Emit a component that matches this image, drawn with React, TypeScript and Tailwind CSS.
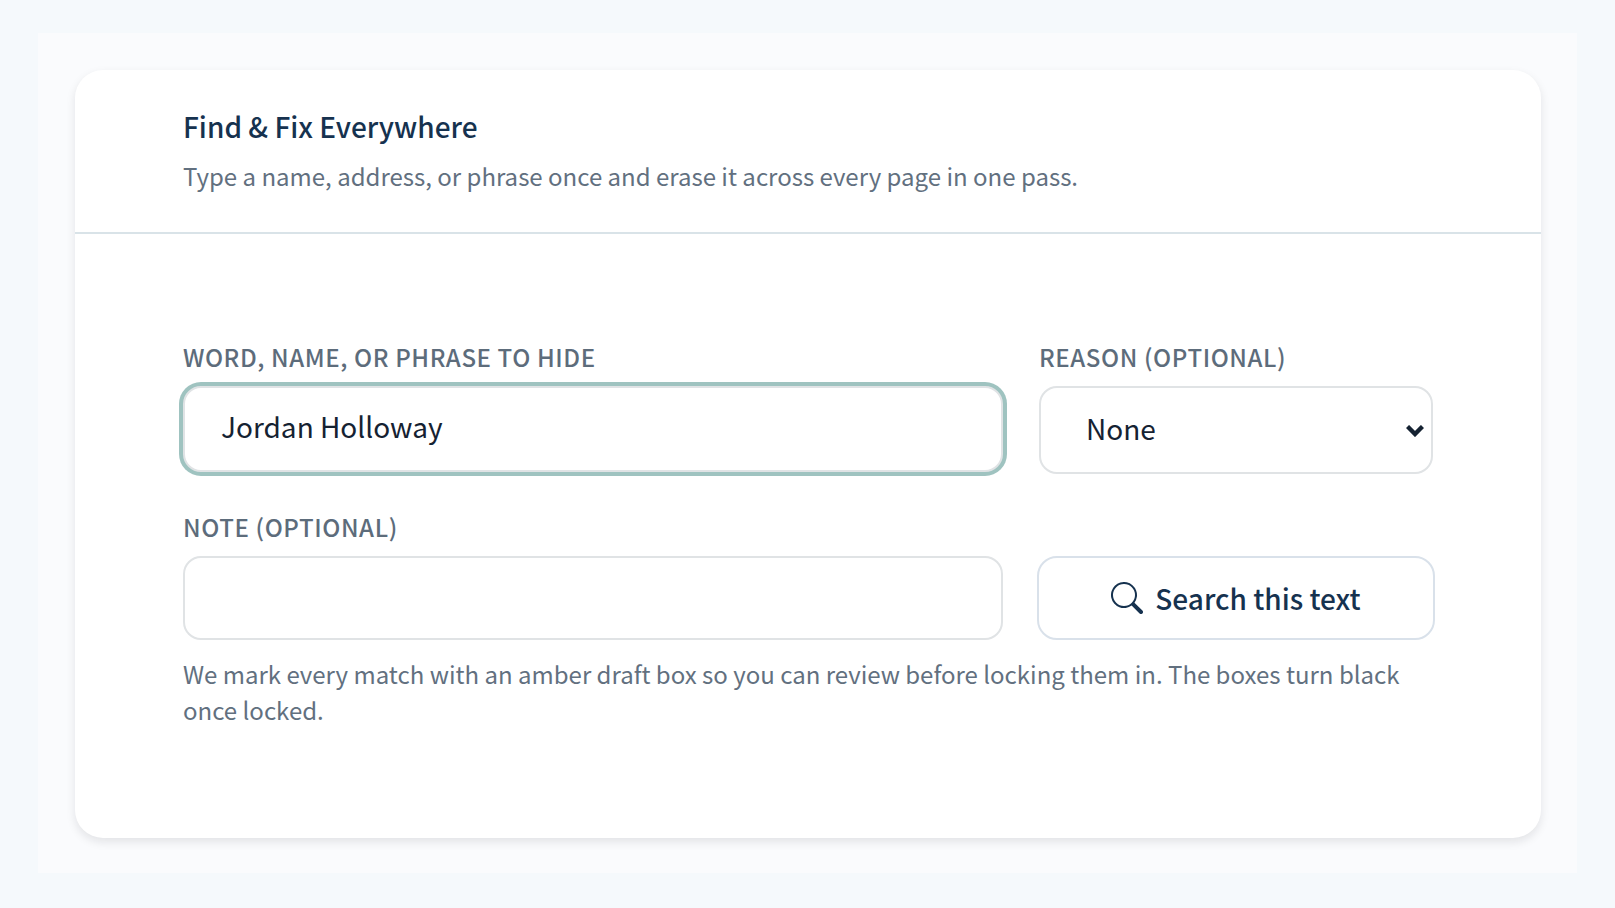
import { useState } from 'react';
import type { ReactNode } from 'react';
import { BsSearch } from 'react-icons/bs';
import { cx } from 'class-variance-authority';

const fieldClass =
  'w-full rounded-[18px] border-2 border-[#e0e3e5] bg-white text-[28px] text-[#152232] outline-none';

const reasons = ['None', 'Personal data', 'Confidential', 'Legal privilege'];

const Field = ({ id, label, children }: { id: string; label: string; children: ReactNode }) => (
  <div className="flex flex-col">
    <label
      htmlFor={id}
      className="mb-[11px] text-[24px] leading-9 font-medium tracking-wide uppercase text-[#5d6c7b]"
    >
      {label}
    </label>
    {children}
  </div>
);

export default function App() {
  const [phrase, setPhrase] = useState('Jordan Holloway');
  const [reason, setReason] = useState('None');
  const [note, setNote] = useState('');

  return (
    <main className="flex min-h-screen flex-col bg-[#f5f9fc] px-[38px] pt-[33px] pb-[35px] font-['Noto_Sans_CJK_SC',sans-serif]">
      <div className="flex flex-1 flex-col bg-[#fafbfd] pt-[37px] pr-9 pb-[35px] pl-[37px]">
        <section className="flex-1 rounded-[28px] bg-white shadow-[0_4px_10px_rgba(15,23,32,0.1)]">
          <header className="border-b-2 border-[#d9e3e8] px-[108px] pt-[34px] pb-[38px]">
            <h1 className="text-[28px] leading-[44px] font-medium text-[#16324f]">
              Find &amp; Fix Everywhere
            </h1>
            <p className="mt-2.5 text-[24px] leading-9 text-[#62707f]">
              Type a name, address, or phrase once and erase it across every page in one pass.
            </p>
          </header>

          <form className="px-[108px] pt-[105px] pb-24" onSubmit={(e) => e.preventDefault()}>
            <div className="grid grid-cols-[820fr_394fr] gap-x-9 gap-y-[35px]">
              <Field id="phrase" label="Word, name, or phrase to hide">
                <input
                  id="phrase"
                  type="text"
                  value={phrase}
                  onChange={(e) => setPhrase(e.target.value)}
                  className={cx(fieldClass, 'h-[86px] px-9 pb-1.5 ring-4 ring-[#9fc3c0]')}
                />
              </Field>

              <Field id="reason" label="Reason (optional)">
                <div className="relative">
                  <select
                    id="reason"
                    value={reason}
                    onChange={(e) => setReason(e.target.value)}
                    className={cx(fieldClass, 'h-[88px] appearance-none pr-12 pb-1 pl-[45px]')}
                  >
                    {reasons.map((r) => (
                      <option key={r}>{r}</option>
                    ))}
                  </select>
                  <svg
                    viewBox="0 0 18 12"
                    className="pointer-events-none absolute top-[39px] right-[9px] h-3 w-[18px]"
                    fill="none"
                    stroke="#152232"
                    strokeWidth="4.4"
                    aria-hidden="true"
                  >
                    <path d="M1.5 1.5 9 9l7.5-7.5" />
                  </svg>
                </div>
              </Field>

              <Field id="note" label="Note (optional)">
                <input
                  id="note"
                  type="text"
                  value={note}
                  onChange={(e) => setNote(e.target.value)}
                  className={cx(fieldClass, 'h-[84px] px-9 pb-1.5')}
                />
              </Field>

              <button
                type="submit"
                className="-mx-0.5 flex h-[84px] items-center justify-center gap-3 self-end rounded-[20px] border-2 border-[#d9e1ea] bg-white text-[28px] font-medium text-[#16324f]"
              >
                <BsSearch className="size-8" aria-hidden="true" />
                Search this text
              </button>
            </div>

            <p className="mt-4 text-[24px] leading-9 text-[#62707f]">
              We mark every match with an amber draft box so you can review before locking them in. The
              boxes turn black once locked.
            </p>
          </form>
        </section>
      </div>
    </main>
  );
}
